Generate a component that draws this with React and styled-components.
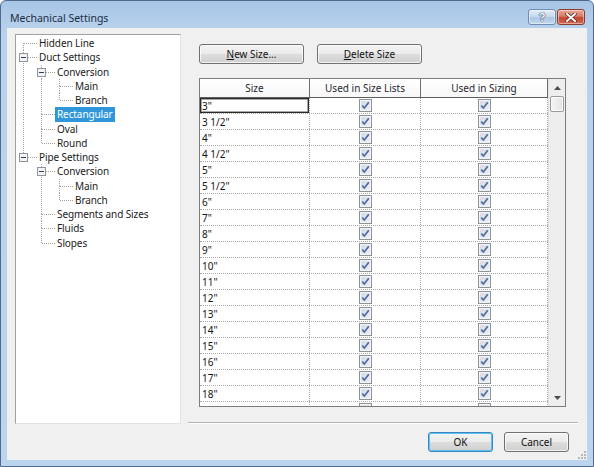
import React from 'react';
import styled, { createGlobalStyle } from 'styled-components';

const GlobalStyle = createGlobalStyle`
  html, body { margin: 0; padding: 0; background: #ffffff; }
  body { font-family: "Noto Sans", "Open Sans", sans-serif; font-size: 10px; color: #111; }
  * { box-sizing: border-box; }
`;

const Window = styled.div`
  width: 594px;
  height: 467px;
  display: flex;
  flex-direction: column;
  border: 1px solid #51698a;
  border-radius: 6px 6px 0 0;
  background: linear-gradient(#a7c5e6 0px, #b8d2ed 30px, #bcd5ee 100%);
  overflow: hidden;
`;

const TitleBar = styled.div`
  height: 27px;
  display: flex;
  align-items: flex-start;
  padding: 7px 8px 0 9px;
`;

const Title = styled.div`
  flex: 1;
  margin-top: 3px;
  font-size: 10.5px;
  color: #1c2c42;
`;

const CaptionButtons = styled.div`
  display: flex;
  gap: 1px;
  margin-top: 1px;
`;

const CaptionButton = styled.div`
  width: 28px;
  height: 16px;
  border-radius: 3px;
  border: 1px solid ${p => (p.$close ? '#8a3b2d' : '#6f8db3')};
  background: ${p =>
    p.$close
      ? 'linear-gradient(#e8a898 0%, #d87a66 45%, #c5472f 55%, #d46a52 100%)'
      : 'linear-gradient(#e1ebf7 0%, #c9dbef 45%, #adc6e4 55%, #c3d8ef 100%)'};
  box-shadow: inset 0 0 0 1px rgba(255, 255, 255, 0.45);
  display: flex;
  align-items: center;
  justify-content: center;
  color: #fff;
  font-family: "Liberation Sans", sans-serif;
  font-weight: bold;
  font-size: 11px;
  text-shadow: 0 0 1px #2b3f5a, 0 0 1px #2b3f5a, 0 0 1px #2b3f5a;
`;

const Client = styled.div`
  position: relative;
  flex: 1;
  margin: 0 6px 6px 6px;
  background: #f0f0f0;
  display: flex;
  flex-direction: column;
  padding: 6px 9px 8px 8px;
`;

const Body = styled.div`
  flex: 1;
  display: flex;
  min-height: 0;
`;

const Tree = styled.div`
  width: 166px;
  background: #ffffff;
  border-top: 1px solid #a0a0a0;
  border-left: 1px solid #a0a0a0;
  border-right: 1px solid #e3e3e3;
  border-bottom: 1px solid #e3e3e3;
  padding-top: 1px;
`;

const TreeRowBox = styled.div`
  display: flex;
  align-items: center;
  height: 14.25px;
`;

const TreeLabel = styled.span`
  height: 14.25px;
  line-height: 14.25px;
  padding: 0 2px;
  white-space: nowrap;
  letter-spacing: -0.1px;
  color: ${p => (p.$selected ? '#ffffff' : '#1a1a1a')};
  background: ${p => (p.$selected ? '#2f97d9' : 'transparent')};
`;

const GuideSvg = styled.svg`
  flex: none;
  display: block;
`;

const DOT = '#a3a3a3';

function Guide({ on }) {
  return (
    <GuideSvg width="18" height="14.25" viewBox="0 0 18 14.25">
      {on && <line x1="7.5" y1="0" x2="7.5" y2="14.25" stroke={DOT} strokeDasharray="1 1" />}
    </GuideSvg>
  );
}

function Connector({ first, last, expander }) {
  return (
    <GuideSvg width="21" height="14.25" viewBox="0 0 21 14.25">
      {!first && <line x1="7.5" y1="0" x2="7.5" y2="7" stroke={DOT} strokeDasharray="1 1" />}
      {!last && <line x1="7.5" y1="7" x2="7.5" y2="14.25" stroke={DOT} strokeDasharray="1 1" />}
      <line x1="8" y1="7.5" x2="21" y2="7.5" stroke={DOT} strokeDasharray="1 1" />
      {expander && (
        <g>
          <rect x="3.5" y="3.5" width="8" height="8" fill="#f3f3f3" stroke="#8e959e" />
          <line x1="5" y1="7.5" x2="10" y2="7.5" stroke="#283e58" />
        </g>
      )}
    </GuideSvg>
  );
}

const treeNodes = [
  { label: 'Hidden Line', guides: [], first: true },
  { label: 'Duct Settings', guides: [], expander: true },
  { label: 'Conversion', guides: [true], expander: true },
  { label: 'Main', guides: [true, true] },
  { label: 'Branch', guides: [true, true], last: true },
  { label: 'Rectangular', guides: [true], selected: true },
  { label: 'Oval', guides: [true] },
  { label: 'Round', guides: [true], last: true },
  { label: 'Pipe Settings', guides: [], expander: true, last: true },
  { label: 'Conversion', guides: [false], expander: true },
  { label: 'Main', guides: [false, true] },
  { label: 'Branch', guides: [false, true], last: true },
  { label: 'Segments and Sizes', guides: [false] },
  { label: 'Fluids', guides: [false] },
  { label: 'Slopes', guides: [false], last: true },
];

function TreeRow({ node }) {
  return (
    <TreeRowBox>
      {node.guides.map((g, i) => (
        <Guide key={i} on={g} />
      ))}
      <Connector first={node.first} last={node.last} expander={node.expander} />
      <TreeLabel $selected={node.selected}>{node.label}</TreeLabel>
    </TreeRowBox>
  );
}

const RightPane = styled.div`
  flex: 1;
  margin-left: 7px;
  display: flex;
  flex-direction: column;
`;

const ButtonRow = styled.div`
  display: flex;
  gap: 13px;
  margin: 10px 0 0 11px;
`;

const PushButton = styled.button`
  width: ${p => p.$w}px;
  height: 20px;
  padding: 0;
  border: 1px solid ${p => (p.$default ? '#3c85c0' : '#707070')};
  border-radius: 3px;
  background: linear-gradient(#f3f3f3 0%, #ebebeb 48%, #dddddd 52%, #d0d0d0 100%);
  box-shadow: ${p =>
    p.$default ? 'inset 0 0 0 1px #56c3f2' : 'inset 0 0 0 1px rgba(255,255,255,0.75)'};
  font-family: "Noto Sans", "Open Sans", sans-serif;
  font-size: 10px;
  color: #111;
  line-height: 18px;
  text-align: center;
`;

const GridBox = styled.div`
  margin: 14px 12px 0 11px;
  height: 329px;
  display: flex;
  border: 1px solid #7c7c7c;
  background: #ffffff;
  overflow: hidden;
`;

const Table = styled.div`
  flex: 1;
  display: flex;
  flex-direction: column;
  overflow: hidden;
`;

const COLS = '110px 111px 127px';

const HeaderRow = styled.div`
  display: grid;
  grid-template-columns: ${COLS};
  height: 19px;
  flex: none;
  border-bottom: 1px solid #5e5e5e;
  background: linear-gradient(#ffffff, #f7f7f7);
`;

const HeaderCell = styled.div`
  display: flex;
  align-items: center;
  justify-content: center;
  border-right: 1px solid #6e6e6e;
  color: #1f1f2e;
  white-space: nowrap;
`;

const DataRow = styled.div`
  display: grid;
  grid-template-columns: ${COLS};
  height: 16px;
  flex: none;
  border-bottom: 1px dotted #a9a9a9;
`;

const Cell = styled.div`
  display: flex;
  align-items: center;
  justify-content: ${p => (p.$center ? 'center' : 'flex-start')};
  padding-left: ${p => (p.$center ? 0 : 2)}px;
  border-right: 1px dotted #a9a9a9;
  color: #141414;
  box-shadow: ${p => (p.$focus ? 'inset 0 0 0 1px #2a2a2a, inset 0 0 0 1.5px #555' : 'none')};
  white-space: nowrap;
`;

const CheckBox = styled.span`
  width: 13px;
  height: 13px;
  display: flex;
  align-items: center;
  justify-content: center;
  border: 1px solid #8f9296;
  background: linear-gradient(135deg, #d5d9df, #eef0f3);
  box-shadow: inset 0 0 0 1px #f4f5f7;
`;

function Check() {
  return (
    <CheckBox>
      <svg width="9" height="9" viewBox="0 0 9 9">
        <path d="M1.2 4.6 L3.4 7 L7.8 1.2" fill="none" stroke="#4a6ea8" strokeWidth="1.7" />
      </svg>
    </CheckBox>
  );
}

const Scrollbar = styled.div`
  width: 17px;
  flex: none;
  display: flex;
  flex-direction: column;
  background: #eeeeee;
  border-left: 1px solid #e2e2e2;
`;

const ScrollArrow = styled.div`
  height: 17px;
  display: flex;
  align-items: center;
  justify-content: center;
`;

const Thumb = styled.div`
  height: 16px;
  margin: 0 1px 0 1px;
  border: 1px solid #9b9b9b;
  border-radius: 2px;
  background: linear-gradient(90deg, #f4f4f4, #e4e4e4);
  box-shadow: inset 0 0 0 1px #fbfbfb;
`;

const Track = styled.div`
  flex: 1;
`;

const Separator = styled.div`
  margin-top: auto;
  height: 2px;
  border-top: 1px solid #b4b4b4;
  border-bottom: 1px solid #ffffff;
`;

const Footer = styled.div`
  display: flex;
  justify-content: flex-end;
  gap: 11px;
  margin-top: 8px;
  padding-right: 9px;
`;

const Grip = styled.svg`
  position: absolute;
  right: 1px;
  bottom: 1px;
`;

const sizes = [
  '3"', '3 1/2"', '4"', '4 1/2"', '5"', '5 1/2"', '6"', '7"', '8"', '9"', '10"',
  '11"', '12"', '13"', '14"', '15"', '16"', '17"', '18"', '',
];

export default function App() {
  return (
    <>
      <GlobalStyle />
      <Window>
        <TitleBar>
          <Title>Mechanical Settings</Title>
          <CaptionButtons>
            <CaptionButton>?</CaptionButton>
            <CaptionButton $close>
              <svg width="12" height="9" viewBox="0 0 12 9">
                <path d="M2 1 L10 8 M10 1 L2 8" stroke="#5a2218" strokeWidth="3.4" strokeLinecap="round" />
                <path d="M2 1 L10 8 M10 1 L2 8" stroke="#ffffff" strokeWidth="2" strokeLinecap="round" />
              </svg>
            </CaptionButton>
          </CaptionButtons>
        </TitleBar>
        <Client>
          <Body>
            <Tree>
              {treeNodes.map((n, i) => (
                <TreeRow key={i} node={n} />
              ))}
            </Tree>
            <RightPane>
              <ButtonRow>
                <PushButton $w={105}>
                  <u>N</u>ew Size...
                </PushButton>
                <PushButton $w={105}>
                  <u>D</u>elete Size
                </PushButton>
              </ButtonRow>
              <GridBox>
                <Table>
                  <HeaderRow>
                    <HeaderCell>Size</HeaderCell>
                    <HeaderCell>Used in Size Lists</HeaderCell>
                    <HeaderCell>Used in Sizing</HeaderCell>
                  </HeaderRow>
                  {sizes.map((s, i) => (
                    <DataRow key={i}>
                      <Cell $focus={i === 0}>{s}</Cell>
                      <Cell $center>
                        <Check />
                      </Cell>
                      <Cell $center>
                        <Check />
                      </Cell>
                    </DataRow>
                  ))}
                </Table>
                <Scrollbar>
                  <ScrollArrow>
                    <svg width="7" height="4" viewBox="0 0 7 4">
                      <path d="M0 4 L3.5 0 L7 4 Z" fill="#4d4d4d" />
                    </svg>
                  </ScrollArrow>
                  <Thumb />
                  <Track />
                  <ScrollArrow>
                    <svg width="7" height="4" viewBox="0 0 7 4">
                      <path d="M0 0 L7 0 L3.5 4 Z" fill="#4d4d4d" />
                    </svg>
                  </ScrollArrow>
                </Scrollbar>
              </GridBox>
              <Separator />
            </RightPane>
          </Body>
          <Footer>
            <PushButton $w={65} $default>
              OK
            </PushButton>
            <PushButton $w={65}>Cancel</PushButton>
          </Footer>
          <Grip width="8" height="8" viewBox="0 0 8 8">
            {[[6, 0], [6, 3], [3, 3], [6, 6], [3, 6], [0, 6]].map(([x, y], i) => (
              <rect key={i} x={x} y={y} width="2" height="2" fill="#b5b9be" />
            ))}
          </Grip>
        </Client>
      </Window>
    </>
  );
}
